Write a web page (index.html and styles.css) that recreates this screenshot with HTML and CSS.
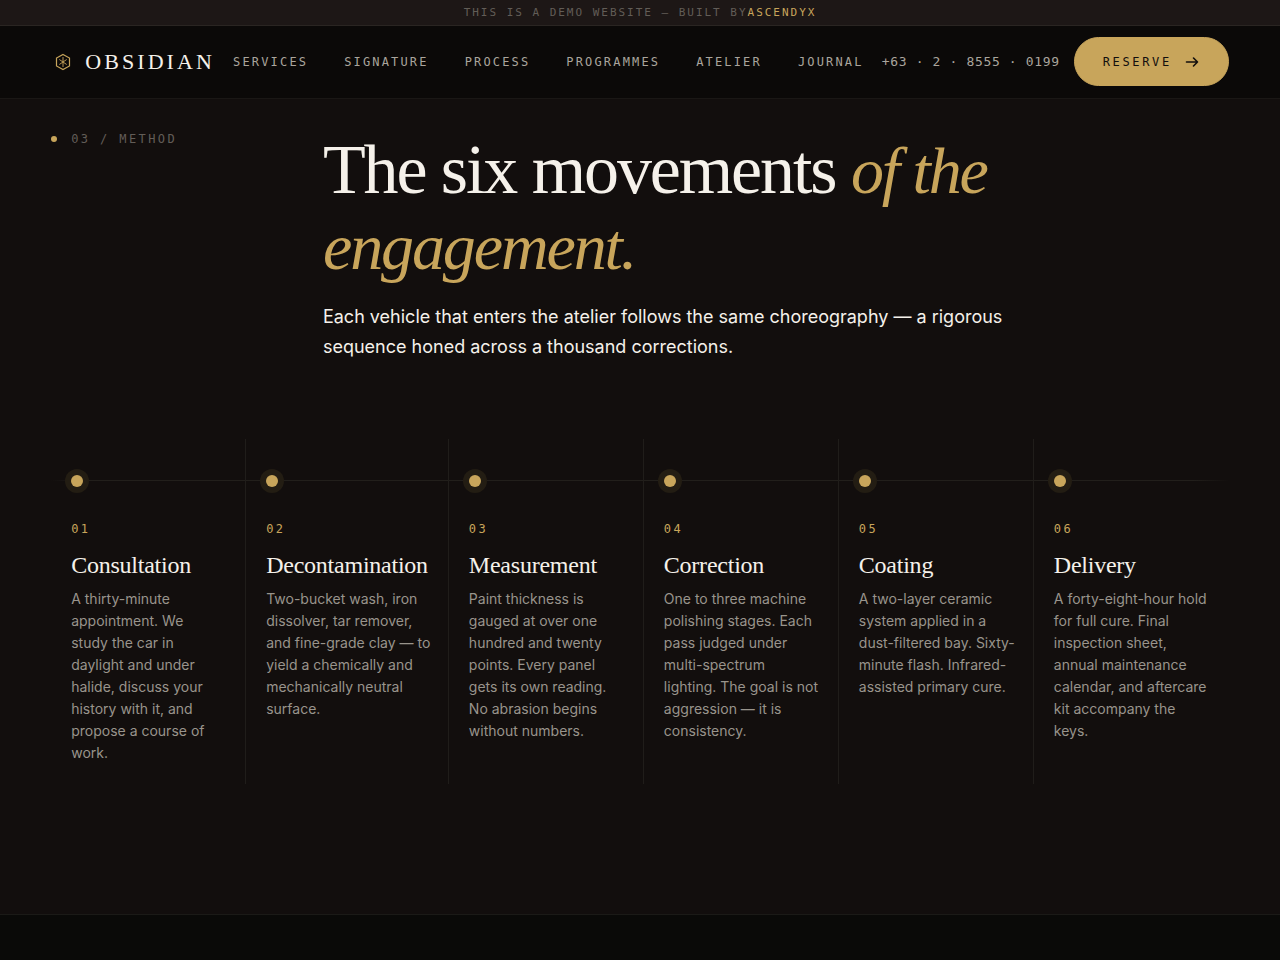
FILE: index.html
```
<!DOCTYPE html>
<html lang="en">
<head>
    <meta charset="UTF-8">
    <meta name="viewport" content="width=device-width, initial-scale=1.0">
    <title>Obsidian</title>
    <link rel="stylesheet" href="styles.css">
</head>
<body>
    <div class="demo-bar">
        <span>This is a demo website — built by</span><a href="#">Ascendyx</a>
    </div>

    <header class="site-header">
        <a href="#" class="brand">
            <svg viewBox="0 0 24 24" fill="none" stroke="currentColor" stroke-width="1.2" class="brand-mark" aria-hidden="true">
                <path d="M12 4.4l6.5 3.6v8L12 19.6 5.500 16V8z" />
                <path d="M12 7v10M8.300 9.500l7.400 5M15.700 9.500l-7.400 5" stroke-width="0.9" />
            </svg>
            <span>OBSIDIAN</span>
        </a>
        <nav class="site-nav">
            <a href="#">Services</a>
            <a href="#">Signature</a>
            <a href="#process">Process</a>
            <a href="#">Programmes</a>
            <a href="#">Atelier</a>
            <a href="#">Journal</a>
        </nav>
        <div class="header-actions">
            <a href="tel:+63285550199" class="phone">+63 · 2 · 8555 · 0199</a>
            <button type="button" class="reserve">
                Reserve
                <svg viewBox="0 0 16 16" fill="none" stroke="currentColor" stroke-width="1.6" stroke-linecap="round" stroke-linejoin="round" aria-hidden="true">
                    <path d="M2.500 8h11M9.500 4l4 4-4 4" />
                </svg>
            </button>
        </div>
    </header>

    <main>
        <section class="process" id="process">
            <div class="section-head">
                <p class="eyebrow">03 / Method</p>
                <div class="section-intro">
                    <h1>The six movements <em>of the</em> <em>engagement.</em></h1>
                    <p>Each vehicle that enters the atelier follows the same choreography — a rigorous sequence honed across a thousand corrections.</p>
                </div>
            </div>

            <ol class="steps">
                <li class="step">
                    <span class="step-number">01</span>
                    <h2>Consultation</h2>
                    <p>A thirty-minute appointment. We<br> study the car in<br> daylight and under halide, discuss your history with it, and propose a course of work.</p>
                </li>
                <li class="step">
                    <span class="step-number">02</span>
                    <h2>Decontamination</h2>
                    <p>Two-bucket wash, iron dissolver, tar remover, and fine-grade clay — to yield a chemically and mechanically neutral surface.</p>
                </li>
                <li class="step">
                    <span class="step-number">03</span>
                    <h2>Measurement</h2>
                    <p>Paint thickness is gauged at over one hundred and twenty points. Every panel gets its own reading. No abrasion begins without numbers.</p>
                </li>
                <li class="step">
                    <span class="step-number">04</span>
                    <h2>Correction</h2>
                    <p>One to three machine polishing stages. Each pass judged under multi-spectrum<br> lighting. The goal is not aggression — it is<br> consistency.</p>
                </li>
                <li class="step">
                    <span class="step-number">05</span>
                    <h2>Coating</h2>
                    <p>A two-layer ceramic system applied in a dust-filtered bay. Sixty-minute flash. Infrared-assisted primary cure.</p>
                </li>
                <li class="step">
                    <span class="step-number">06</span>
                    <h2>Delivery</h2>
                    <p>A forty-eight-hour hold for full cure. Final inspection sheet,<br> annual maintenance calendar, and aftercare kit accompany the<br> keys.</p>
                </li>
            </ol>
        </section>
    </main>
</body>
</html>
```
FILE: styles.css
```
:root {
    --background: #0a0a08;
    --surface: #120e0d;
    --bar: #1d1716;
    --header: #0b0908;
    --line: #201d1a;
    --foreground: #f5f1ea;
    --muted: #99948c;
    --dim: #625d57;
    --gold: #c8a55b;
    --gutter: 4vw;
    --serif: "Liberation Serif", "Times New Roman", serif;
    --sans: Inter, "Liberation Sans", sans-serif;
    --mono: "DejaVu Sans Mono", "Liberation Mono", monospace;
}

* {
    box-sizing: border-box;
}

body {
    margin: 0;
    min-height: 100vh;
    background-color: var(--background);
    color: var(--foreground);
    font-family: var(--sans);
}

a {
    color: inherit;
    text-decoration: none;
}

h1, h2, p, ol {
    margin: 0;
    padding: 0;
    font-weight: normal;
}

/* Top bar */
.demo-bar {
    display: flex;
    justify-content: center;
    padding: 5px 16px 4px;
    border-bottom: 1px solid #2a2522;
    background-color: var(--bar);
    color: var(--dim);
    font: 11px/16px var(--mono);
    letter-spacing: 0.18em;
    text-transform: uppercase;
}

.demo-bar a {
    color: var(--gold);
}

/* Header */
.site-header {
    display: flex;
    align-items: center;
    justify-content: space-between;
    padding: 11px var(--gutter) 12px;
    border-bottom: 1px solid #1a1715;
    background-color: var(--header);
    white-space: nowrap;
}

.brand {
    display: flex;
    align-items: center;
    gap: 10px;
    font: 22px/28px var(--serif);
    letter-spacing: 0.14em;
}

.brand-mark {
    width: 24px;
    height: 24px;
    color: var(--gold);
}

.site-nav {
    display: flex;
    gap: 36px;
    color: #aaa59d;
    font: 12px/16px var(--mono);
    letter-spacing: 0.18em;
    text-transform: uppercase;
}

.header-actions {
    display: flex;
    align-items: center;
    gap: 14px;
}

.phone {
    color: #aaa59d;
    font: 13px/16px var(--mono);
    letter-spacing: 0.05em;
}

.reserve {
    display: flex;
    align-items: center;
    gap: 12px;
    padding: 16px 28px 15px;
    border: 1px solid var(--gold);
    border-radius: 999px;
    background-color: var(--gold);
    color: #120e0d;
    font: 12px/16px var(--mono);
    letter-spacing: 0.22em;
    text-transform: uppercase;
    cursor: pointer;
}

.reserve svg {
    width: 16px;
    height: 16px;
}

/* Process */
.process {
    padding: 33px var(--gutter) 130px;
    border-bottom: 1px solid #1b1a17;
    background-color: var(--surface);
}

.section-head {
    display: grid;
    grid-template-columns: 3fr 10fr;
    margin-bottom: 77px;
}

.eyebrow {
    display: flex;
    align-items: center;
    align-self: start;
    gap: 14px;
    color: var(--dim);
    font: 12px/14px var(--mono);
    letter-spacing: 0.2em;
    text-transform: uppercase;
}

.eyebrow::before {
    content: "";
    width: 6px;
    height: 6px;
    border-radius: 50%;
    background-color: var(--gold);
}

.section-intro h1 {
    max-width: 720px;
    margin-bottom: 18px;
    font: 70px/75px var(--serif);
    letter-spacing: -0.03em;
}

.section-intro em {
    color: var(--gold);
    font-size: 66px;
}

.section-intro p {
    max-width: 700px;
    font-size: 18px;
    line-height: 30px;
}

.steps {
    position: relative;
    display: grid;
    grid-template-columns: repeat(6, 1fr);
    list-style: none;
}

/* Timeline running behind the dots */
.steps::before {
    content: "";
    position: absolute;
    top: 41px;
    left: 0;
    right: 0;
    height: 1px;
    background: linear-gradient(90deg, transparent, #221f1b 3%, #221f1b 97%, transparent);
}

.step {
    position: relative;
    padding: 36px 16px 20px 20px;
    border-right: 1px solid var(--line);
}

.step:last-child {
    border-right: none;
}

.step::before {
    content: "";
    display: block;
    width: 12px;
    height: 12px;
    margin-bottom: 34px;
    border-radius: 50%;
    background-color: var(--gold);
    box-shadow: 0 0 0 6px #231d13;
}

.step-number {
    display: block;
    margin-bottom: 14px;
    color: var(--gold);
    font: 12px/16px var(--mono);
    letter-spacing: 0.2em;
}

.step h2 {
    margin: 0 4px 9px 0;
    font: 24px/28px var(--serif);
    letter-spacing: -0.01em;
}

.step p {
    color: var(--muted);
    font-size: 14px;
    line-height: 22px;
}
```
